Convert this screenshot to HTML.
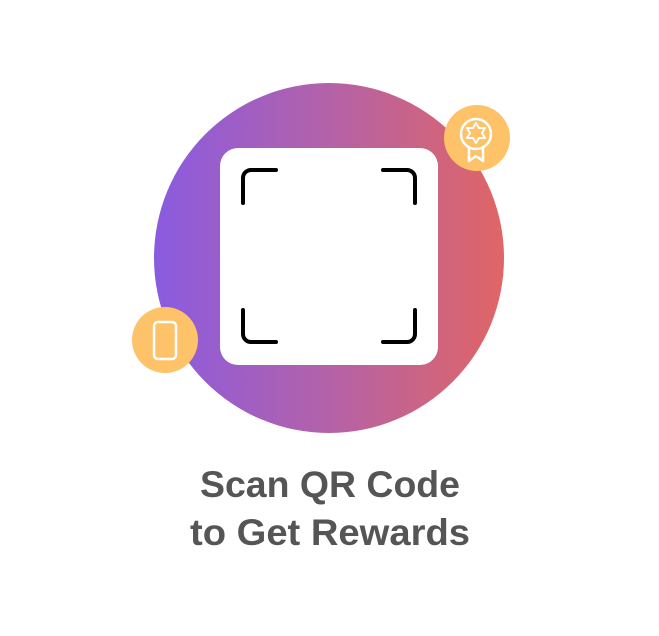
<!DOCTYPE html>
<html><head><style>html,body{margin:0;padding:0;background:#fff;width:659px;height:636px;overflow:hidden}</style></head>
<body>
<svg width="659" height="636" viewBox="0 0 659 636" xmlns="http://www.w3.org/2000/svg">
<defs>
<linearGradient id="g" x1="0" y1="0" x2="1" y2="0">
<stop offset="0" stop-color="#8a5be0"/>
<stop offset="0.5" stop-color="#b462a8"/>
<stop offset="1" stop-color="#e06565"/>
</linearGradient>
</defs>
<circle cx="329" cy="258" r="175" fill="url(#g)"/>
<rect x="220" y="148" width="218" height="217" rx="18" fill="#fff"/>
<g fill="none" stroke="#000" stroke-width="4" stroke-linecap="round">
<path d="M243 203 V178 a8 8 0 0 1 8 -8 H276"/>
<path d="M383 170 H407 a8 8 0 0 1 8 8 V203"/>
<path d="M243 310 V334 a8 8 0 0 0 8 8 H276"/>
<path d="M383 342 H407 a8 8 0 0 0 8 -8 V310"/>
</g>
<circle cx="477" cy="138" r="33" fill="#fec268"/>
<g fill="none" stroke="#fff" stroke-width="2.5" stroke-linejoin="round">
<circle cx="476" cy="134" r="15"/>
<path d="M476 123 l3 5 h6 l-3 5 3 5 h-6 l-3 5 -3 -5 h-6 l3 -5 -3 -5 h6 z" stroke-width="2"/>
<path d="M469 148 v13 l7 -5 7 5 v-13"/>
</g>
<circle cx="165" cy="340" r="33" fill="#fec268"/>
<rect x="154" y="322" width="22" height="37" rx="4" fill="none" stroke="#fff" stroke-width="2.5"/>
<g font-family="Liberation Sans, sans-serif" font-weight="bold" font-size="37" fill="#555" text-anchor="middle">
<text x="330" y="497" textLength="260" lengthAdjust="spacingAndGlyphs">Scan QR Code</text>
<text x="330" y="545" textLength="280" lengthAdjust="spacingAndGlyphs">to Get Rewards</text>
</g>
</svg>
</body></html>
